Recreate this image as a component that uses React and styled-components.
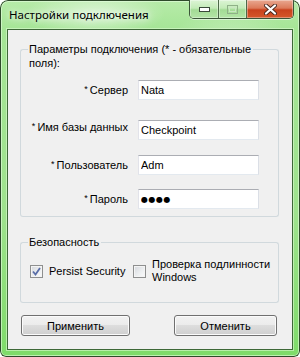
import React from "react";
import styled, { createGlobalStyle } from "styled-components";

const GlobalStyle = createGlobalStyle`
  html, body {
    margin: 0;
    padding: 0;
    background: #ffffff;
  }
  body {
    font-family: "Liberation Sans", Arial, sans-serif;
    font-size: 11px;
    color: #000;
  }
  * {
    box-sizing: border-box;
  }
`;

const Window = styled.div`
  width: 300px;
  height: 357px;
  display: flex;
  flex-direction: column;
  border-radius: 8px 8px 6px 6px;
  overflow: hidden;
  background:
    radial-gradient(ellipse 70px 22px at 95px 14px, rgba(255, 255, 255, 0.55), rgba(255, 255, 255, 0)),
    radial-gradient(ellipse 60px 30px at 230px 40px, rgba(255, 255, 255, 0.3), rgba(255, 255, 255, 0)),
    linear-gradient(to bottom, #b7eba9 0%, #a5e596 30px, #9ee28d 60%, #7edb69 100%);
  box-shadow: inset 0 0 0 1px #2e4a2a, inset 0 0 0 2px rgba(230, 255, 225, 0.6);
`;

const TitleBar = styled.div`
  height: 29px;
  display: flex;
  align-items: flex-start;
  padding: 0 6px 0 9px;
`;

const Title = styled.div`
  margin-top: 7px;
  font-family: "Noto Sans", "Open Sans", sans-serif;
  font-size: 11.5px;
  line-height: 16px;
  color: #000;
  text-shadow: 0 0 6px rgba(255, 255, 255, 0.9), 0 0 10px rgba(255, 255, 255, 0.7);
`;

const CaptionGroup = styled.div`
  margin-left: auto;
  display: flex;
  height: 19px;
  border: 1px solid #3b5538;
  border-top: none;
  border-radius: 0 0 5px 5px;
  overflow: hidden;
  box-shadow: 0 1px 0 rgba(255, 255, 255, 0.5);
`;

const CaptionButton = styled.div`
  width: ${(p) => p.$w}px;
  display: flex;
  align-items: center;
  justify-content: center;
  border-left: ${(p) => (p.$first ? "none" : "1px solid #4d6a49")};
  background: ${(p) =>
    p.$close
      ? "linear-gradient(to bottom, #e9a890 0%, #dc7a5a 45%, #c9421c 55%, #d4582a 100%)"
      : "linear-gradient(to bottom, #dcf4d5 0%, #c3ebb8 45%, #a3db95 55%, #b4e5a7 100%)"};
  box-shadow: inset 0 0 0 1px rgba(255, 255, 255, 0.35);
`;

const Client = styled.div`
  margin: 0 7px 7px 7px;
  flex: 1;
  display: flex;
  flex-direction: column;
  background: #f0f0f0;
  border: 1px solid #3d6837;
  padding: 12px 13px 13px 12px;
  box-shadow: 0 0 0 1px rgba(220, 250, 210, 0.6);
`;

const GroupBox = styled.div`
  display: flex;
  flex-direction: column;
  margin-top: ${(p) => p.$mt || 0}px;
`;

const GroupHead = styled.div`
  display: flex;
  align-items: stretch;
`;

const HeadCorner = styled.div`
  width: 8px;
  flex-shrink: 0;
  margin-top: 7px;
  border-top: 1px solid #d1d9dd;
  border-left: 1px solid #d1d9dd;
  border-top-left-radius: 3px;
`;

const HeadText = styled.div`
  padding: 0 2px 0 1px;
  line-height: 14px;
  white-space: nowrap;
`;

const HeadFill = styled.div`
  flex: 1;
  margin-top: 7px;
  border-top: 1px solid #d1d9dd;
  border-right: 1px solid #d1d9dd;
  border-top-right-radius: 3px;
`;

const GroupBody = styled.div`
  border: 1px solid #d1d9dd;
  border-top: none;
  border-radius: 0 0 3px 3px;
  padding: ${(p) => p.$pad};
`;

const FieldRow = styled.div`
  display: flex;
  align-items: center;
  margin-top: ${(p) => p.$mt || 0}px;
`;

const FieldLabel = styled.div`
  width: 107px;
  text-align: right;
  white-space: nowrap;
  margin-bottom: ${(p) => (p.$raise ? 6 : 0)}px;
`;

const Star = styled.span`
  font-size: 9px;
  vertical-align: 2px;
  margin-right: 2px;
`;

const TextBox = styled.input`
  margin-left: 10px;
  width: 121px;
  height: 20px;
  padding: 0 0 0 2px;
  border: 1px solid #e2e3ea;
  border-top-color: #abadb3;
  border-right-color: #dbdfe6;
  border-bottom-color: #e3e9ef;
  background: #fff;
  font-family: ${(p) => (p.$secret ? '"DejaVu Sans", sans-serif' : '"Liberation Sans", Arial, sans-serif')};
  font-size: ${(p) => (p.$secret ? "8px" : "11px")};
  letter-spacing: ${(p) => (p.$secret ? "0.5px" : "0")};
  color: #000;
  outline: none;
`;

const CheckRow = styled.div`
  display: flex;
  align-items: center;
`;

const CheckItem = styled.label`
  display: flex;
  align-items: center;
  gap: 6px;
  width: ${(p) => (p.$w ? `${p.$w}px` : "auto")};
  line-height: 13px;
`;

const Box = styled.span`
  width: 13px;
  height: 13px;
  flex-shrink: 0;
  display: flex;
  align-items: center;
  justify-content: center;
  border: 1px solid #8e8f8f;
  background: linear-gradient(135deg, #d4d7dc 0%, #eceef0 55%, #fbfbfb 100%);
  box-shadow: inset 0 0 0 1px #f4f4f4;
`;

const ButtonRow = styled.div`
  display: flex;
  justify-content: space-between;
  margin-top: 12px;
  padding: 0 2px 0 1px;
`;

const Button = styled.button`
  width: ${(p) => p.$w}px;
  height: 21px;
  padding: 0;
  border: 1px solid #707070;
  border-radius: 3px;
  background: linear-gradient(to bottom, #f2f2f2 0%, #ebebeb 50%, #dddddd 50%, #cfcfcf 100%);
  box-shadow: inset 0 0 0 1px #fbfbfb;
  font-family: "Liberation Sans", Arial, sans-serif;
  font-size: 11px;
  color: #000;
`;

function Check({ checked }) {
  return (
    <Box>
      {checked && (
        <svg width="9" height="9" viewBox="0 0 9 9">
          <path d="M1 4.5 L3.5 7.5 L8 1" fill="none" stroke="#5a6ea8" strokeWidth="1.8" />
        </svg>
      )}
    </Box>
  );
}

function Group({ title, mt, pad, children }) {
  return (
    <GroupBox $mt={mt}>
      <GroupHead>
        <HeadCorner />
        <HeadText>{title}</HeadText>
        <HeadFill />
      </GroupHead>
      <GroupBody $pad={pad}>{children}</GroupBody>
    </GroupBox>
  );
}

const fields = [
  { label: "Сервер", value: "Nata", mt: 0 },
  { label: "Имя базы данных", value: "Checkpoint", mt: 20, raise: true },
  { label: "Пользователь", value: "Adm", mt: 15 },
  { label: "Пароль", value: "●●●●", mt: 14, secret: true },
];

export default function App() {
  return (
    <>
      <GlobalStyle />
      <Window>
        <TitleBar>
          <Title>Настройки подключения</Title>
          <CaptionGroup>
            <CaptionButton $w={28} $first>
              <svg width="11" height="5" viewBox="0 0 11 5">
                <rect x="0.5" y="0.5" width="10" height="4" fill="#fff" stroke="#3a4a3a" />
              </svg>
            </CaptionButton>
            <CaptionButton $w={28}>
              <svg width="11" height="9" viewBox="0 0 11 9">
                <rect x="0.5" y="0.5" width="10" height="8" fill="none" stroke="#8fb088" />
                <rect x="2.5" y="2.5" width="6" height="4" fill="none" stroke="#c9e6c2" />
              </svg>
            </CaptionButton>
            <CaptionButton $w={47} $close>
              <svg width="13" height="11" viewBox="0 0 13 11">
                <path d="M2 1.5 L11 9.5 M11 1.5 L2 9.5" stroke="#4a2a20" strokeWidth="4" strokeLinecap="round" />
                <path d="M2 1.5 L11 9.5 M11 1.5 L2 9.5" stroke="#fff" strokeWidth="2.2" strokeLinecap="round" />
              </svg>
            </CaptionButton>
          </CaptionGroup>
        </TitleBar>
        <Client>
          <Group
            title={
              <>
                Параметры подключения (* - обязательные
                <br />
                поля):
              </>
            }
            pad="10px 0 7px 0"
          >
            {fields.map((f) => (
              <FieldRow key={f.label} $mt={f.mt}>
                <FieldLabel $raise={f.raise}>
                  <Star>*</Star>
                  {f.label}
                </FieldLabel>
                <TextBox defaultValue={f.value} $secret={f.secret} readOnly />
              </FieldRow>
            ))}
          </Group>
          <Group title="Безопасность" mt={18} pad="9px 0 18px 9px">
            <CheckRow>
              <CheckItem $w={103}>
                <Check checked />
                Persist Security
              </CheckItem>
              <CheckItem>
                <Check />
                <span>
                  Проверка подлинности
                  <br />
                  Windows
                </span>
              </CheckItem>
            </CheckRow>
          </Group>
          <ButtonRow>
            <Button $w={109}>Применить</Button>
            <Button $w={103}>Отменить</Button>
          </ButtonRow>
        </Client>
      </Window>
    </>
  );
}
